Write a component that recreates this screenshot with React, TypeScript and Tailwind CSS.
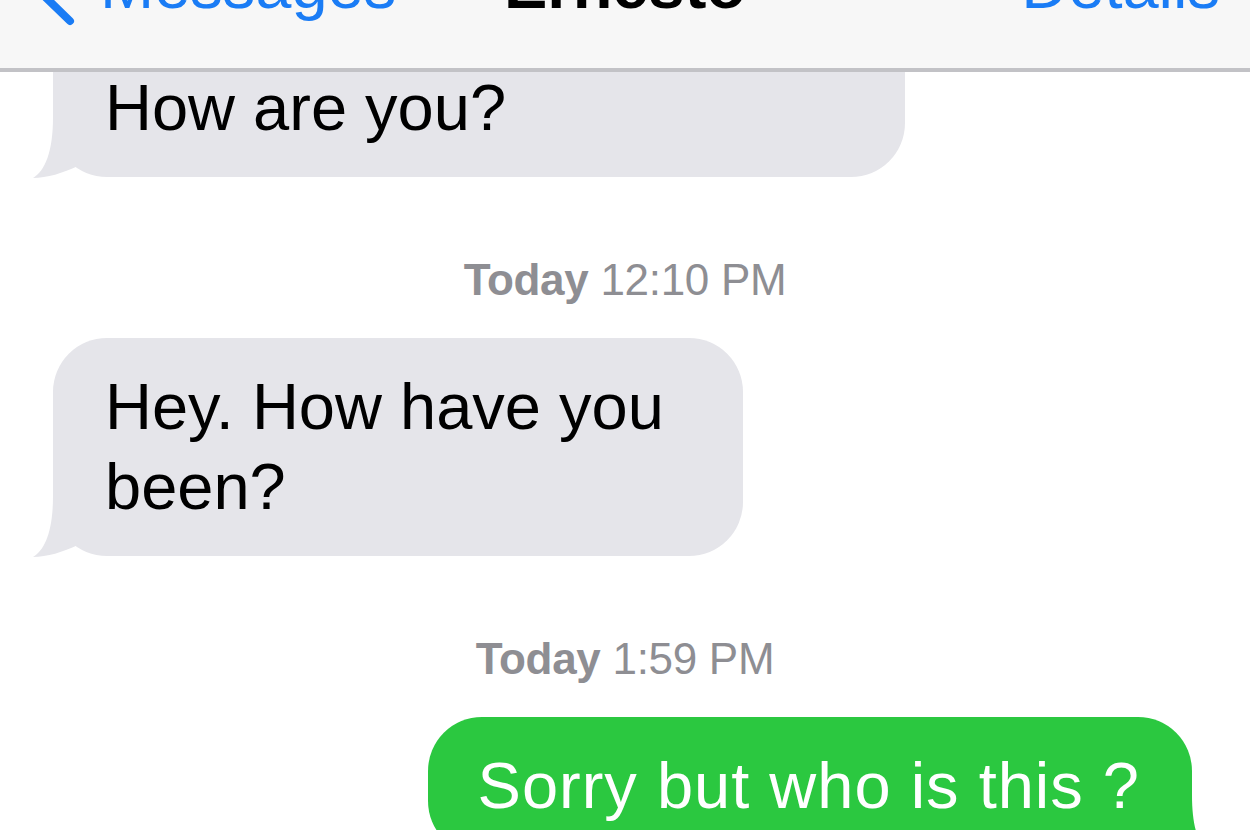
import React from "react"

function Tail({ color, flip = false }: { color: string; flip?: boolean }) {
  return (
    <svg
      viewBox="0 0 48 64"
      className={
        flip
          ? "absolute right-[-22px] bottom-[-2px] w-[48px] h-[64px] -scale-x-100"
          : "absolute left-[-22px] bottom-[-2px] w-[48px] h-[64px]"
      }
    >
      <path d="M22 2 C22 37 14 56 2 63 C16 63 32 58 47 51 L47 2 Z" fill={color} />
    </svg>
  )
}

function Stamp({ time }: { time: string }) {
  return (
    <div className="mt-[77px] mb-[32px] text-center text-[44px] leading-[52px] tracking-[-0.3px] text-[#8e8e93]">
      <span className="font-bold">Today</span> {time}
    </div>
  )
}

export default function App() {
  return (
    <div className="w-full h-[830px] overflow-hidden bg-white font-['Liberation_Sans',Arial,sans-serif]">
      {/* Nav bar */}
      <header className="relative z-10 h-[72px] overflow-hidden bg-[#f7f7f7] border-b-[4px] border-[#c2c2c6]">
        <div className="-mt-[46px] grid grid-cols-3 items-start text-[65px] leading-[64px]">
          <div className="flex items-start gap-[22px] pl-[30px] text-[#1a7cf5]">
            <svg viewBox="0 0 48 70" className="mt-[4px] w-[48px] h-[70px] shrink-0">
              <path d="M40 -3 L6 30 L40 63" fill="none" stroke="#1a7cf5" strokeWidth="8" strokeLinecap="round" strokeLinejoin="round" />
            </svg>
            <span>Messages</span>
          </div>
          <div className="text-center font-bold text-black">Ernesto</div>
          <div className="pr-[30px] text-right text-[#1a7cf5]">Details</div>
        </div>
      </header>

      {/* Conversation */}
      <main className="flex flex-col text-[65px] leading-[80px]">
        <div className="relative self-start ml-[53px] -mt-[72px] w-[852px] rounded-[54px] bg-[#e5e5ea] pt-[68px] pb-[29px] pl-[52px] text-black">
          How are you?
          <Tail color="#e5e5ea" />
        </div>

        <Stamp time="12:10 PM" />

        <div className="relative self-start ml-[53px] w-[690px] rounded-[54px] bg-[#e5e5ea] py-[29px] pl-[52px] pr-[40px] text-black">
          Hey. How have you been?
          <Tail color="#e5e5ea" />
        </div>

        <Stamp time="1:59 PM" />

        <div className="relative self-end mr-[58px] rounded-[54px] bg-[#2bc840] pt-[29px] pb-[29px] pl-[50px] pr-[52px] tracking-[1px] text-white whitespace-nowrap">
          Sorry but who is this ?
          <Tail color="#2bc840" flip />
        </div>
      </main>
    </div>
  )
}
